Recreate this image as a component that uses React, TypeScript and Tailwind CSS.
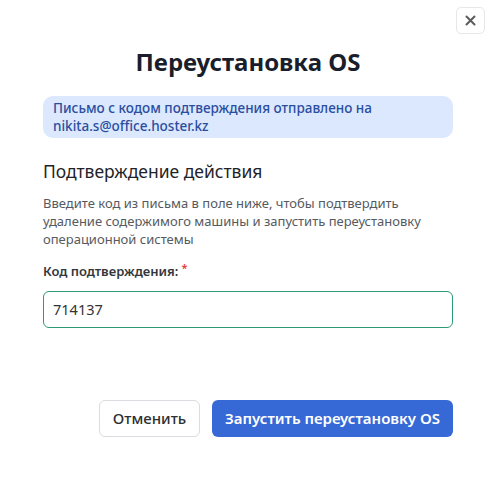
import React from "react";

export default function App() {
  return (
    <div className="w-[495px] h-[480px] bg-white relative" style={{ fontFamily: '"Noto Sans", "Open Sans", sans-serif' }}>
      <button className="absolute left-[456px] top-[7px] w-[29px] h-[27px] border border-[#e5e7eb] rounded-[5px] flex items-center justify-center text-[#555]">
        <svg width="11" height="11" viewBox="0 0 11 11"><path d="M1.5 1.5 L9.5 9.5 M9.5 1.5 L1.5 9.5" stroke="#5b5b5b" strokeWidth="2" strokeLinecap="round" /></svg>
      </button>
      <div className="px-[43px] pr-[42px] pt-[44px] flex flex-col">
        <h1 className="text-center text-[24px] font-bold text-[#1a1e2b] leading-[36px]">Переустановка OS</h1>
        <div className="mt-[16px] bg-[#dbe8fd] rounded-[10px] px-[10px] py-[3px] text-[13.5px] leading-[18px] font-medium text-[#2a4da0]">
          Письмо с кодом подтверждения отправлено на nikita.s@office.hoster.kz
        </div>
        <h2 className="mt-[21px] text-[17.5px] leading-[24px] text-[#1f2329]">Подтверждение действия</h2>
        <p className="mt-[11px] max-w-[392px] text-[13px] leading-[18px] text-[#555a60]">
          Введите код из письма в поле ниже, чтобы подтвердить удаление содержимого машины и запустить переустановку операционной системы
        </p>
        <label className="mt-[14px] text-[13px] leading-[18px] font-semibold text-[#33373c]">
          Код подтверждения:<span className="text-[#e53935] text-[11px] ml-[3px] relative top-[-4px]">*</span>
        </label>
        <div className="mt-[10px] h-[37px] border border-[#2e9a73] rounded-[6px] flex items-center px-[9px] text-[14.5px] text-[#333]">714137</div>
        <div className="mt-[72px] flex justify-end gap-[12px]">
          <button className="h-[37px] w-[101px] border border-[#d9dce0] rounded-[6px] text-[15px] font-medium text-[#2c2f33] bg-white">Отменить</button>
          <button className="h-[37px] w-[241px] rounded-[6px] text-[15px] font-semibold text-white bg-[#3669d6]">Запустить переустановку OS</button>
        </div>
      </div>
    </div>
  );
}
